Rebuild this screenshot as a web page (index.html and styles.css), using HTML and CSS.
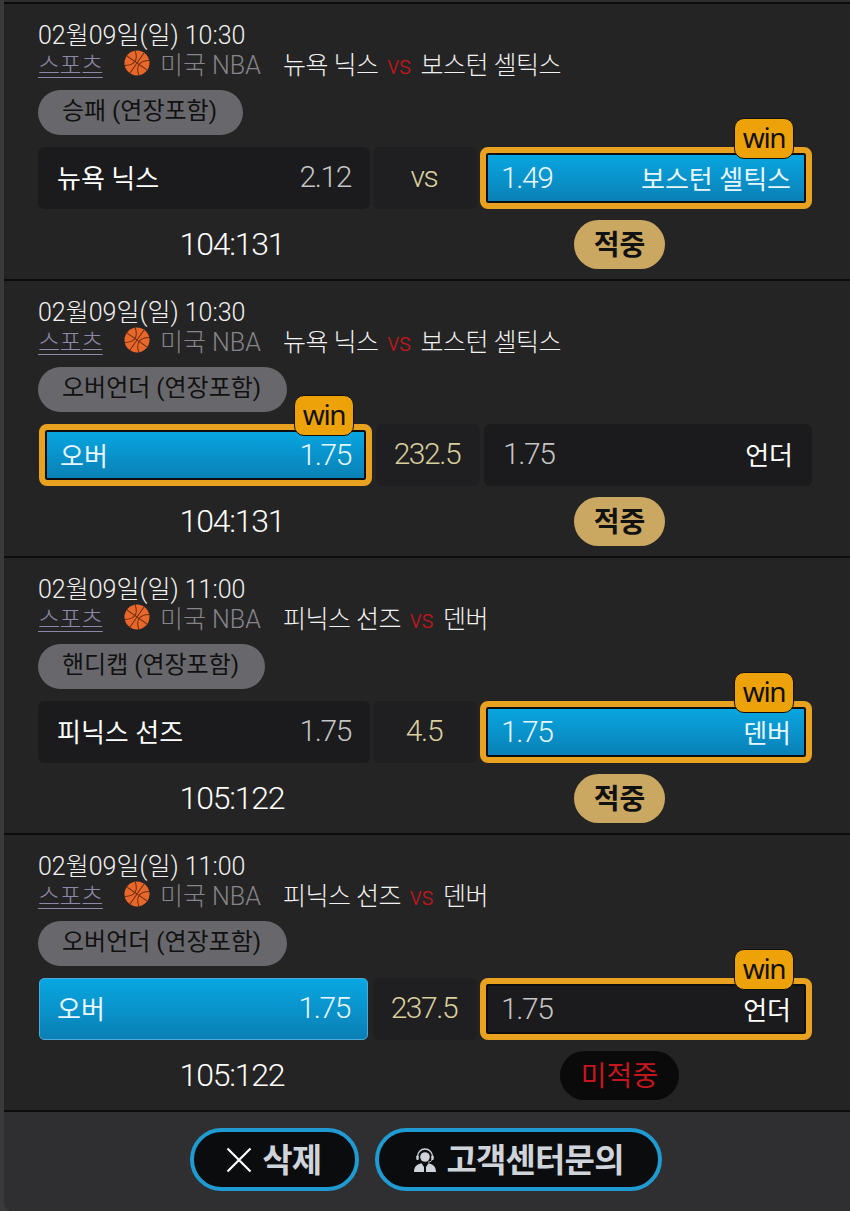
FILE: index.html
```html
<!DOCTYPE html>
<html lang="ko">
<head>
    <meta charset="UTF-8">
    <meta name="viewport" content="width=device-width, initial-scale=1.0">
    <title>베팅내역</title>
    <link rel="stylesheet" href="styles.css">
</head>
<body>

<svg class="defs" width="0" height="0">
    <symbol id="ball" viewBox="0 0 26 26">
        <circle cx="13" cy="13" r="12.5" fill="#e8672a"/>
        <g transform="rotate(35 13 13)" fill="none" stroke="#6e2c10" stroke-width="1">
            <path d="M13 .5v25M.5 13h25M4.500 4c4 3 6 5.500 6 9s-2 6-6 9M21.500 4c-4 3-6 5.500-6 9s2 6 6 9"/>
        </g>
    </symbol>
</svg>

<div class="panel">

    <div class="bet">
        <div class="date">02월09일(일) 10:30</div>
        <div class="league">
            <span class="sport">스포츠</span>
            <svg class="ball"><use href="#ball"/></svg>
            <span class="lname">미국 NBA</span>
            <span class="teams">뉴욕 닉스 <em>vs</em> 보스턴 셀틱스</span>
        </div>
        <span class="market">승패 (연장포함)</span>
        <div class="odds">
            <div class="pick"><span class="name">뉴욕 닉스</span><span class="rate">2.12</span></div>
            <div class="mid">vs</div>
            <div class="pick on won">
                <span class="win">win</span>
                <span class="rate">1.49</span><span class="name">보스턴 셀틱스</span>
            </div>
        </div>
        <div class="foot">
            <div class="score">104:131</div>
            <div class="state"><span class="hit">적중</span></div>
        </div>
    </div>

    <div class="bet">
        <div class="date">02월09일(일) 10:30</div>
        <div class="league">
            <span class="sport">스포츠</span>
            <svg class="ball"><use href="#ball"/></svg>
            <span class="lname">미국 NBA</span>
            <span class="teams">뉴욕 닉스 <em>vs</em> 보스턴 셀틱스</span>
        </div>
        <span class="market">오버언더 (연장포함)</span>
        <div class="odds home">
            <div class="pick on won">
                <span class="win">win</span>
                <span class="name">오버</span><span class="rate">1.75</span>
            </div>
            <div class="mid">232.5</div>
            <div class="pick"><span class="rate">1.75</span><span class="name">언더</span></div>
        </div>
        <div class="foot">
            <div class="score">104:131</div>
            <div class="state"><span class="hit">적중</span></div>
        </div>
    </div>

    <div class="bet">
        <div class="date">02월09일(일) 11:00</div>
        <div class="league">
            <span class="sport">스포츠</span>
            <svg class="ball"><use href="#ball"/></svg>
            <span class="lname">미국 NBA</span>
            <span class="teams">피닉스 선즈 <em>vs</em> 덴버</span>
        </div>
        <span class="market">핸디캡 (연장포함)</span>
        <div class="odds">
            <div class="pick"><span class="name">피닉스 선즈</span><span class="rate">1.75</span></div>
            <div class="mid">4.5</div>
            <div class="pick on won">
                <span class="win">win</span>
                <span class="rate">1.75</span><span class="name">덴버</span>
            </div>
        </div>
        <div class="foot">
            <div class="score">105:122</div>
            <div class="state"><span class="hit">적중</span></div>
        </div>
    </div>

    <div class="bet">
        <div class="date">02월09일(일) 11:00</div>
        <div class="league">
            <span class="sport">스포츠</span>
            <svg class="ball"><use href="#ball"/></svg>
            <span class="lname">미국 NBA</span>
            <span class="teams">피닉스 선즈 <em>vs</em> 덴버</span>
        </div>
        <span class="market">오버언더 (연장포함)</span>
        <div class="odds">
            <div class="pick on plain"><span class="name">오버</span><span class="rate">1.75</span></div>
            <div class="mid">237.5</div>
            <div class="pick won">
                <span class="win">win</span>
                <span class="rate">1.75</span><span class="name">언더</span>
            </div>
        </div>
        <div class="foot">
            <div class="score">105:122</div>
            <div class="state"><span class="miss">미적중</span></div>
        </div>
    </div>

    <div class="actions">
        <button class="btn" type="button">
            <svg class="x" viewBox="0 0 26 26"><path d="M1.500 1.500l23 23M24.500 1.500l-23 23" fill="none" stroke="#fff" stroke-width="2.200"/></svg>
            삭제
        </button>
        <button class="btn" type="button">
            <svg class="agent" viewBox="0 0 22 24">
                <path d="M3.500 11V8.500a7.500 7.500 0 0 1 15 0V11" fill="none" stroke="#cfd3da" stroke-width="1.300"/>
                <path d="M18 11c0 2-1.500 3-4 3.200" fill="none" stroke="#cfd3da" stroke-width="1"/>
                <circle cx="11" cy="9" r="4.800" fill="#cfd3da"/>
                <rect x="2.300" y="7.500" width="2.400" height="4.500" rx="1" fill="#cfd3da"/>
                <rect x="17.300" y="7.500" width="2.400" height="4.500" rx="1" fill="#cfd3da"/>
                <path d="M0 24c0-5.500 3-8 7.500-8.800L10 19v5H0zM22 24c0-5.500-3-8-7.500-8.800L12 19v5h10z" fill="#cfd3da"/>
            </svg>
            고객센터문의
        </button>
    </div>

</div>

</body>
</html>
```

FILE: styles.css
```css
* {
    box-sizing: border-box;
}
html, body {
    margin: 0;
    padding: 0;
}
body {
    width: 850px;
    height: 1211px;
    overflow: hidden;
    background: #3a3a3c;
    font-family: Roboto, "Noto Sans CJK KR", sans-serif;
    color: #fff;
}
.defs {
    position: absolute;
}
.panel {
    margin-left: 4px;
    padding-top: 2px;
    height: 1211px;
    background: #2f2e30;
    border-bottom-left-radius: 8px;
}
.bet {
    height: 277px;
    padding: 17px 38px 0 34px;
    background: #252425;
    border-top: 2px solid #0c0c0c;
}
.date {
    height: 30px;
    font-size: 25px;
    font-weight: 300;
    line-height: 30px;
    color: #f2f2f2;
}
.league {
    display: flex;
    align-items: center;
    height: 28px;
    margin-top: -2px;
    font-size: 25px;
    font-weight: 300;
}
.sport {
    flex: none;
    width: 66px;
    color: #8d88a8;
    font-size: 24px;
    letter-spacing: -0.5px;
    white-space: nowrap;
    text-decoration: underline;
    text-underline-offset: 3px;
    text-decoration-thickness: 1px;
}
.ball {
    flex: none;
    width: 26px;
    height: 26px;
    margin: 0 10px 0 20px;
}
.lname {
    flex: none;
    width: 123px;
    color: #85858a;
}
.teams {
    color: #f2f2f2;
    letter-spacing: -0.5px;
}
.teams em {
    margin: 0 4px 0 3px;
    font-style: normal;
    color: #c4161c;
}
.market {
    display: inline-block;
    height: 45px;
    margin-top: 13px;
    padding: 0 26px 0 24px;
    background: #68686c;
    border-radius: 23px;
    color: #111;
    font-size: 24px;
    line-height: 42px;
}
.odds {
    display: grid;
    grid-template-columns: 1fr 104px 1fr;
    gap: 3px;
    height: 62px;
    margin-top: 12px;
}
.odds.home {
    grid-template-columns: 333px 104px 1fr;
    gap: 4px;
    padding-left: 1px;
}
.pick {
    position: relative;
    display: flex;
    align-items: center;
    justify-content: space-between;
    padding: 0 19px 4px 19px;
    background: #1b1a1c;
    border-radius: 6px;
    font-size: 26px;
}
.name {
    color: #fff;
}
.rate {
    color: #c4c4c4;
    font-weight: 300;
    font-size: 30px;
    letter-spacing: -1.4px;
}
.mid {
    padding: 0 2px 4px 0;
    display: flex;
    align-items: center;
    justify-content: center;
    background: #1f1e20;
    border-radius: 6px;
    color: #d8ce9e;
    font-size: 30px;
    font-weight: 300;
    letter-spacing: -1.4px;
}
.pick.on {
    background: linear-gradient(#08a7e2, #0a7fb4);
    border-radius: 5px;
}
.pick.on .rate, .pick.on .name {
    color: #e8f7ff;
}
.pick.plain {
    margin: 0 2px 0 1px;
    border: 1px solid #4aa9d6;
    padding-left: 17px;
    padding-right: 17px;
}
.pick.won {
    padding: 0 15px 2px;
    background-clip: padding-box;
    border: 6px solid #e8a21f;
    border-radius: 8px;
    box-shadow: inset 0 0 0 2px #0e0d10;
}
.pick.on.won {
    background: linear-gradient(#08a7e2, #0a7fb4) padding-box;
    border-radius: 8px;
}
.win {
    position: absolute;
    top: -35px;
    right: 12px;
    width: 60px;
    height: 41px;
    background: #eda20a;
    border: 1px solid #111;
    border-radius: 10px;
    color: #111;
    font-family: "Noto Sans", sans-serif;
    font-size: 28px;
    letter-spacing: -1.4px;
    line-height: 37px;
    text-align: center;
}
.foot {
    display: flex;
    align-items: center;
    margin-top: 11px;
    height: 49px;
}
.score {
    width: 389px;
    padding: 0 1px 2px 0;
    text-align: center;
    font-size: 32px;
    font-weight: 300;
    letter-spacing: -1.2px;
}
.state {
    flex: 1;
    text-align: center;
}
.hit, .miss {
    display: inline-block;
    height: 49px;
    border-radius: 25px;
    font-family: "Noto Sans CJK KR", sans-serif;
    font-size: 28px;
    line-height: 47px;
}
.hit {
    padding: 0 20px;
    background: #cba862;
    color: #111;
    font-weight: 700;
}
.miss {
    padding: 0 21px;
    background: #0a0a0a;
    color: #c4161c;
}
.actions {
    display: flex;
    justify-content: center;
    gap: 16px;
    padding: 16px 2px 0 0;
    border-top: 2px solid #0c0c0c;
}
.btn {
    display: flex;
    align-items: center;
    gap: 10px;
    height: 63px;
    padding: 0 34px 3px 32px;
    background: #0b0c0e;
    border: 4px solid #1f9bd1;
    border-radius: 32px;
    color: #cfd3da;
    font-family: inherit;
    font-size: 33px;
    font-weight: 700;
    letter-spacing: -0.8px;
}
.x {
    width: 26px;
    height: 26px;
    margin-top: 3px;
}
.agent {
    width: 22px;
    height: 24px;
    margin: 3px 0 0 3px;
}
```
